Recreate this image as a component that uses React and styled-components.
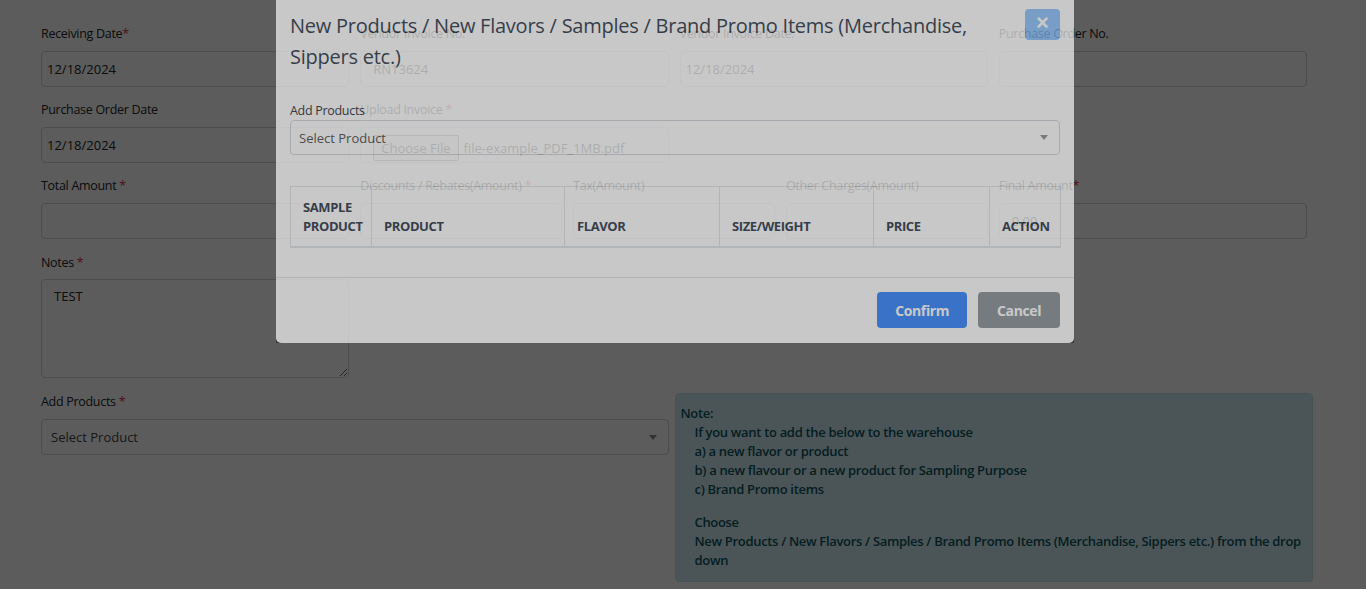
import React from 'react';
import styled, { createGlobalStyle } from 'styled-components';

const GlobalStyle = createGlobalStyle`
  *, *::before, *::after { box-sizing: border-box; }
  html, body { margin: 0; padding: 0; }
  body {
    background: #fff;
    color: #212529;
    font-family: "Open Sans", "Noto Sans", Arial, sans-serif;
    font-size: 13px;
    overflow: hidden;
  }
`;

/* arka plandaki form */
const Page = styled.main`
  width: 1366px;
  height: 589px;
  padding: 25px 0 0 41px;
`;

const FormGrid = styled.div`
  display: grid;
  grid-template-columns: repeat(4, 1fr);
  column-gap: 11px;
  row-gap: 14px;
  width: 1266px;
`;

const Field = styled.div`
  display: flex;
  flex-direction: column;
  grid-column: ${p => (p.$start ? `${p.$start} / ` : '')}span ${p => p.$span || 1};
  margin-top: ${p => p.$push || 0}px;
`;

const SubGrid = styled.div`
  grid-column: span 2;
  display: grid;
  grid-template-columns: repeat(3, 1fr);
  column-gap: 11px;
`;

const Label = styled.label`
  font-size: 12.5px;
  line-height: 18px;
  margin-bottom: ${p => (p.$gap !== undefined ? p.$gap : 8)}px;
  letter-spacing: -0.3px;
  color: inherit;
`;

const Star = styled.span`
  color: #dc3545;
`;

const TextInput = styled.input`
  width: 100%;
  height: 36px;
  padding: 0 ${p => (p.$dense ? 5 : 12)}px;
  border: 1px solid #ced4da;
  border-radius: 4px;
  background: #fff;
  color: #212529;
  font-family: inherit;
  font-size: 13px;
  outline: none;
`;

const TextArea = styled.textarea`
  width: 100%;
  height: 99px;
  padding: 7px 12px;
  border: 1px solid #ced4da;
  border-radius: 4px;
  background: #fff;
  color: #212529;
  font-family: inherit;
  font-size: 13px;
  line-height: 19px;
  outline: none;
`;

const FileBox = styled.div`
  height: 36px;
  display: flex;
  align-items: center;
  gap: 5px;
  padding: 5px 12px 0;
  border: 1px solid #ced4da;
  border-radius: 4px;
  background: #fff;
  font-size: 13px;
`;

const FileButton = styled.span`
  height: 26px;
  display: inline-flex;
  align-items: center;
  padding: 0 7px;
  border: 1px solid #767676;
  border-radius: 2px;
  background: #efefef;
  color: #212529;
`;

const FileName = styled.span`
  color: #212529;
`;

const SelectBox = styled.div`
  height: ${p => p.$h || 36}px;
  display: flex;
  align-items: center;
  padding: 0 11px 0 ${p => p.$pad || 9}px;
  border: 1px solid #ced4da;
  border-radius: 4px;
  background: #fff;
  color: #444;
  font-size: 13px;
`;

const Caret = styled.span`
  margin-left: auto;
  width: 0;
  height: 0;
  border-left: 4px solid transparent;
  border-right: 4px solid transparent;
  border-top: 5px solid #888;
`;

const NoteBox = styled.div`
  grid-column: 3 / span 2;
  align-self: start;
  margin: 1px -6px 0 -5px;
  padding: 10px 5px 11px;
  border: 1px solid #bee5eb;
  border-radius: 4px;
  background: #d1ecf1;
  color: #0c5460;
  font-size: 13px;
  font-weight: 600;
  line-height: 19px;
  letter-spacing: -0.32px;
`;

const NoteIndent = styled.div`
  padding-left: 14px;
`;

const NoteSpacer = styled.div`
  height: 14px;
`;

/* karartma + modal */
const Backdrop = styled.div`
  position: fixed;
  inset: 0;
  background: rgba(0, 0, 0, 0.64);
`;

const Modal = styled.div`
  position: fixed;
  top: -4px;
  left: 276px;
  width: 798px;
  background: #fff;
  border-radius: 5px;
  opacity: 0.66;
`;

const ModalHeader = styled.div`
  display: flex;
  justify-content: space-between;
  align-items: flex-start;
  gap: 12px;
  padding: 15px 14px 15px;
`;

const ModalTitle = styled.h5`
  margin: 0;
  font-size: 20px;
  font-weight: 500;
  line-height: 30.5px;
  letter-spacing: -0.24px;
  color: #1f2e40;
`;

const CloseButton = styled.button`
  flex: 0 0 auto;
  width: 35px;
  height: 31px;
  margin-top: -2px;
  padding: 0 0 3px;
  border: 0;
  border-radius: 4px;
  background: #007bff;
  opacity: 0.47;
  color: #fff;
  font-family: Arial, sans-serif;
  font-size: 22px;
  font-weight: 700;
  line-height: 1;
`;

const ModalBody = styled.div`
  padding: 14px 14px 29px;
`;

const Table = styled.table`
  width: 770px;
  margin-top: 31px;
  border-collapse: collapse;
  table-layout: fixed;
`;

const Th = styled.th`
  width: ${p => p.$w}px;
  padding: 11px 12px 10px;
  border: 1px solid #dee2e6;
  border-bottom: 2px solid #dee2e6;
  text-align: left;
  vertical-align: bottom;
  white-space: nowrap;
  color: #1f2e40;
  font-size: 13px;
  font-weight: 700;
  line-height: 19px;
  letter-spacing: -0.4px;
`;

const ModalFooter = styled.div`
  display: flex;
  justify-content: flex-end;
  gap: 11px;
  padding: 14px 14px 15px;
  border-top: 1px solid #dee2e6;
`;

const Button = styled.button`
  height: 36px;
  padding: 0 ${p => p.$px}px;
  border: 0;
  border-radius: 4px;
  background: ${p => (p.$variant === 'primary' ? '#287dff' : '#838b92')};
  color: #fff;
  font-family: inherit;
  font-size: 14px;
  font-weight: 700;
  letter-spacing: -0.4px;
`;

const columns = [
  { key: 'sample', label: <>SAMPLE<br />PRODUCT</>, w: 81 },
  { key: 'product', label: 'PRODUCT', w: 193 },
  { key: 'flavor', label: 'FLAVOR', w: 155 },
  { key: 'size', label: 'SIZE/WEIGHT', w: 154 },
  { key: 'price', label: 'PRICE', w: 116 },
  { key: 'action', label: 'ACTION', w: 71 },
];

export default function App() {
  return (
    <>
      <GlobalStyle />
      <Page>
        <FormGrid>
          <Field>
            <Label>Receiving Date<Star>*</Star></Label>
            <TextInput $dense readOnly defaultValue="12/18/2024" />
          </Field>
          <Field>
            <Label>Vendor Invoice No.</Label>
            <TextInput readOnly defaultValue="RN13624" />
          </Field>
          <Field>
            <Label>Vendor Invoice Date.</Label>
            <TextInput $dense readOnly defaultValue="12/18/2024" />
          </Field>
          <Field>
            <Label>Purchase Order No.</Label>
            <TextInput readOnly defaultValue="" />
          </Field>

          <Field $start={1}>
            <Label>Purchase Order Date</Label>
            <TextInput $dense readOnly defaultValue="12/18/2024" />
          </Field>
          <Field>
            <Label>Upload Invoice <Star>*</Star></Label>
            <FileBox>
              <FileButton>Choose File</FileButton>
              <FileName>file-example_PDF_1MB.pdf</FileName>
            </FileBox>
          </Field>

          <Field $start={1}>
            <Label>Total Amount <Star>*</Star></Label>
            <TextInput readOnly defaultValue="" />
          </Field>
          <SubGrid>
            <Field>
              <Label>Discounts / Rebates(Amount) <Star>*</Star></Label>
              <TextInput readOnly defaultValue="" />
            </Field>
            <Field>
              <Label>Tax(Amount)</Label>
              <TextInput readOnly defaultValue="" />
            </Field>
            <Field>
              <Label>Other Charges(Amount)</Label>
              <TextInput readOnly defaultValue="" />
            </Field>
          </SubGrid>
          <Field>
            <Label>Final Amount<Star>*</Star></Label>
            <TextInput readOnly defaultValue="0.00" />
          </Field>

          <Field $start={1} $push={1}>
            <Label $gap={7}>Notes <Star>*</Star></Label>
            <TextArea readOnly defaultValue="TEST" />
          </Field>

          <Field $start={1} $span={2} $push={1}>
            <Label>Add Products <Star>*</Star></Label>
            <SelectBox>
              Select Product
              <Caret />
            </SelectBox>
          </Field>
          <NoteBox>
            Note:
            <NoteIndent>
              If you want to add the below to the warehouse
              <br />a) a new flavor or product
              <br />b) a new flavour or a new product for Sampling Purpose
              <br />c) Brand Promo items
              <NoteSpacer />
              Choose
              <br />New Products / New Flavors / Samples / Brand Promo Items (Merchandise, Sippers etc.) from the drop down
            </NoteIndent>
          </NoteBox>
        </FormGrid>
      </Page>

      <Backdrop />
      <Modal role="dialog">
        <ModalHeader>
          <ModalTitle>
            New Products / New Flavors / Samples / Brand Promo Items (Merchandise, Sippers etc.)
          </ModalTitle>
          <CloseButton aria-label="Close">×</CloseButton>
        </ModalHeader>
        <ModalBody>
          <Label $gap={4}>Add Products</Label>
          <SelectBox $h={35} $pad={8}>
            Select Product
            <Caret />
          </SelectBox>
          <Table>
            <thead>
              <tr>
                {columns.map(c => (
                  <Th key={c.key} $w={c.w}>{c.label}</Th>
                ))}
              </tr>
            </thead>
          </Table>
        </ModalBody>
        <ModalFooter>
          <Button $variant="primary" $px={18}>Confirm</Button>
          <Button $px={19}>Cancel</Button>
        </ModalFooter>
      </Modal>
    </>
  );
}
